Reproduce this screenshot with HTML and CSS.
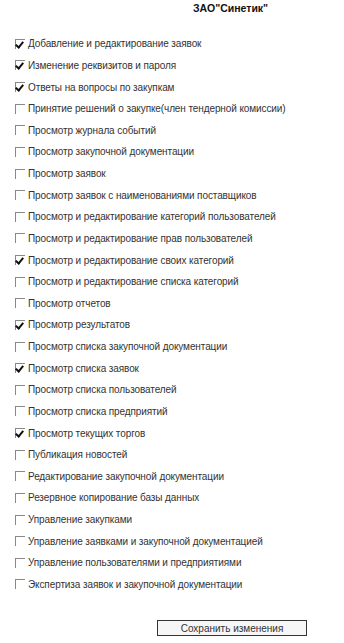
FILE: index.html
```html
<!DOCTYPE html>
<html lang="ru">
<head>
    <meta charset="UTF-8">
    <title>Права пользователя</title>
    <link rel="stylesheet" href="styles.css">
</head>
<body>
    <div class="header">ЗАО"Синетик"</div>
    <form class="rights">
        <label class="row"><span class="box on"></span>Добавление и редактирование заявок</label>
        <label class="row"><span class="box on"></span>Изменение реквизитов и пароля</label>
        <label class="row"><span class="box on"></span>Ответы на вопросы по закупкам</label>
        <label class="row"><span class="box"></span>Принятие решений о закупке(член тендерной комиссии)</label>
        <label class="row"><span class="box"></span>Просмотр журнала событий</label>
        <label class="row"><span class="box"></span>Просмотр закупочной документации</label>
        <label class="row"><span class="box"></span>Просмотр заявок</label>
        <label class="row"><span class="box"></span>Просмотр заявок с наименованиями поставщиков</label>
        <label class="row"><span class="box"></span>Просмотр и редактирование категорий пользователей</label>
        <label class="row"><span class="box"></span>Просмотр и редактирование прав пользователей</label>
        <label class="row"><span class="box on"></span>Просмотр и редактирование своих категорий</label>
        <label class="row"><span class="box"></span>Просмотр и редактирование списка категорий</label>
        <label class="row"><span class="box"></span>Просмотр отчетов</label>
        <label class="row"><span class="box on"></span>Просмотр результатов</label>
        <label class="row"><span class="box"></span>Просмотр списка закупочной документации</label>
        <label class="row"><span class="box on"></span>Просмотр списка заявок</label>
        <label class="row"><span class="box"></span>Просмотр списка пользователей</label>
        <label class="row"><span class="box"></span>Просмотр списка предприятий</label>
        <label class="row"><span class="box on"></span>Просмотр текущих торгов</label>
        <label class="row"><span class="box"></span>Публикация новостей</label>
        <label class="row"><span class="box"></span>Редактирование закупочной документации</label>
        <label class="row"><span class="box"></span>Резервное копирование базы данных</label>
        <label class="row"><span class="box"></span>Управление закупками</label>
        <label class="row"><span class="box"></span>Управление заявками и закупочной документацией</label>
        <label class="row"><span class="box"></span>Управление пользователями и предприятиями</label>
        <label class="row"><span class="box"></span>Экспертиза заявок и закупочной документации</label>
        <div class="actions">
            <button type="button" class="save">Сохранить изменения</button>
        </div>
    </form>
</body>
</html>
```

FILE: styles.css
```css
body { margin: 0; background: #fff; color: #333; font-family: "Liberation Sans", Arial, sans-serif; font-size: 10px; }
.header { padding: 2px 0 0 193px; height: 14px; font-weight: bold; font-size: 10.5px; color: #111; }
.rights { padding-top: 17px; }
.row { display: flex; align-items: center; height: 21.64px; padding-left: 15px; gap: 3px; white-space: nowrap; letter-spacing: -0.1px; }
.box { position: relative; width: 9px; height: 9px; border-top: 1px solid #888; border-left: 1px solid #888; background: #fff; flex: none; }
.box.on::after { content: ""; position: absolute; left: 1px; top: 0; width: 3px; height: 6px; border-right: 2px solid #111; border-bottom: 2px solid #111; transform: rotate(40deg); }
.actions { padding: 25px 0 0 157px; }
.save { width: 150px; height: 16px; padding: 0; border: 1px solid #333; background: #f6f6f6; font-family: "Liberation Sans", Arial, sans-serif; font-size: 10px; color: #333; }
```
